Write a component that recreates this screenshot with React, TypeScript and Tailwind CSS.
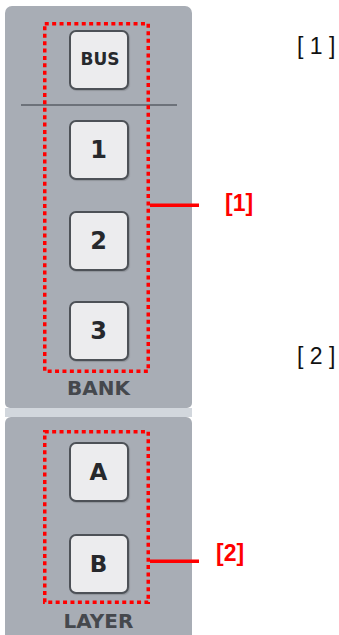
import React from "react";

const dv = { fontFamily: '"DejaVu Sans", Verdana, sans-serif' };
const lib = { fontFamily: '"Liberation Sans", Arial, sans-serif' };

function Btn({ label, size }: { label: string; size: string }) {
  return (
    <div
      className={`w-[60px] h-[60px] shrink-0 rounded-[7px] border-2 border-[#4d5157] bg-[#ececee] flex items-center justify-center font-bold text-[#26282c] shadow-[1px_1px_1px_rgba(0,0,0,0.15)] ${size}`}
      style={dv}
    >
      {label}
    </div>
  );
}

export default function App() {
  return (
    <div className="relative w-[339px] h-[635px] bg-white overflow-hidden">
      <div className="flex flex-col ml-[5px] pt-[6px] w-[187px] h-[635px]">
        <div className="h-[402px] shrink-0 rounded-t-[7px] rounded-b-[5px] bg-[#a8adb5] flex flex-col items-center pt-[24px]">
          <Btn label="BUS" size="text-[17px] pl-[3px]" />
          <div className="self-stretch h-[2px] bg-[#6d727a] mt-[14px] ml-[16px] mr-[15px]" />
          <div className="mt-[14px]"><Btn label="1" size="text-[24px]" /></div>
          <div className="mt-[31px]"><Btn label="2" size="text-[24px]" /></div>
          <div className="mt-[30px]"><Btn label="3" size="text-[24px]" /></div>
          <div className="mt-[17px] text-[20px] leading-[20px] font-bold text-[#45484d]" style={dv}>BANK</div>
        </div>
        <div className="h-[9px] shrink-0 bg-[#d2d7dd]" />
        <div className="flex-1 rounded-t-[6px] bg-[#a8adb5] flex flex-col items-center pt-[25px]">
          <Btn label="A" size="text-[23px]" />
          <div className="mt-[32px]"><Btn label="B" size="text-[23px]" /></div>
          <div className="mt-[17px] text-[20px] leading-[20px] font-bold text-[#45484d]" style={dv}>LAYER</div>
        </div>
      </div>

      <svg className="absolute left-0 top-0 pointer-events-none" width="339" height="635" viewBox="0 0 339 635">
        <rect x="44.75" y="23.75" width="103.5" height="347.5" fill="none" stroke="#ff0000" strokeWidth="3.5" strokeDasharray="4 3.4" />
        <rect x="44.75" y="431.75" width="103.5" height="170.5" fill="none" stroke="#ff0000" strokeWidth="3.5" strokeDasharray="4 3.4" />
        <rect x="150" y="203.5" width="49" height="3.5" fill="#ff0000" />
        <rect x="150" y="559.5" width="49" height="3.5" fill="#ff0000" />
      </svg>

      <div className="absolute left-[297px] top-[35px] text-[23px] leading-[23px] text-[#111] whitespace-pre" style={lib}>[ 1 ]</div>
      <div className="absolute left-[297px] top-[345px] text-[23px] leading-[23px] text-[#111] whitespace-pre" style={lib}>[ 2 ]</div>
      <div className="absolute left-[225px] top-[192px] text-[23px] leading-[23px] font-bold text-[#ff0000]" style={lib}>[1]</div>
      <div className="absolute left-[216px] top-[542px] text-[23px] leading-[23px] font-bold text-[#ff0000]" style={lib}>[2]</div>
    </div>
  );
}
